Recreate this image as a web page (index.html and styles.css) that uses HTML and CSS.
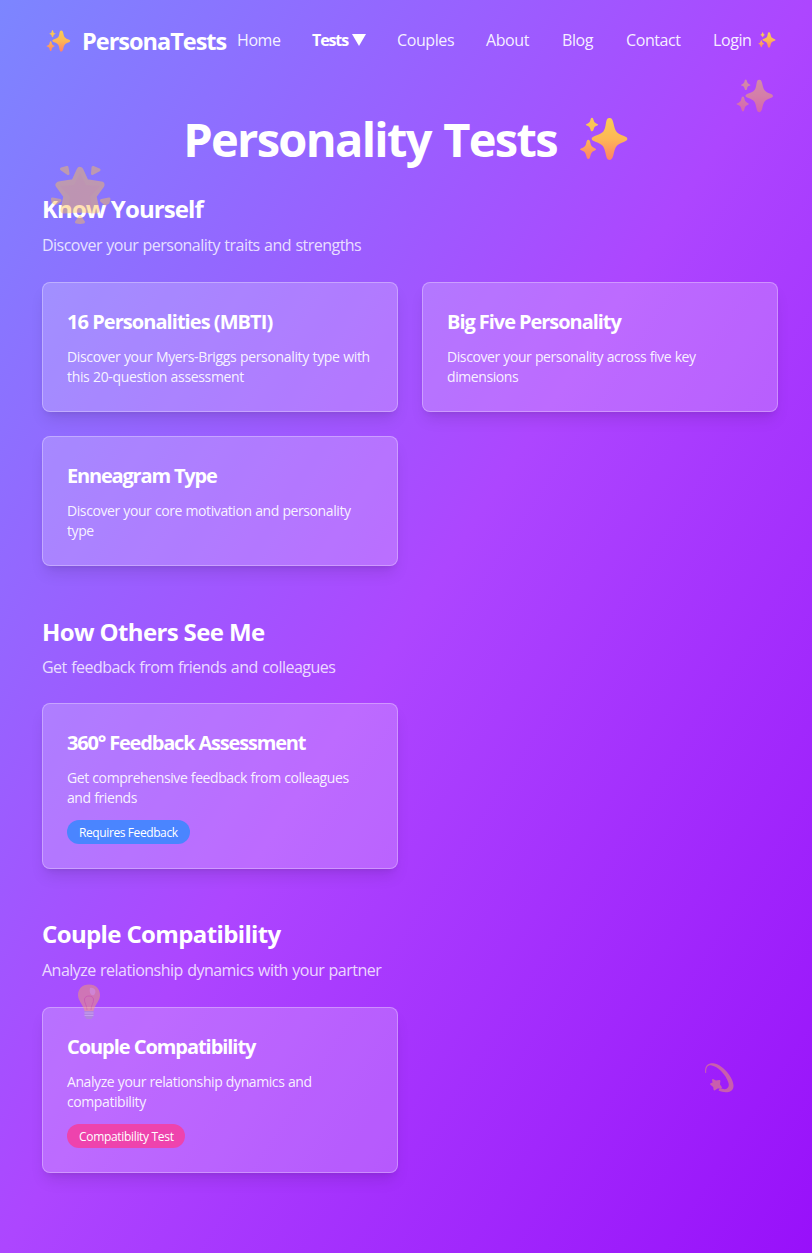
FILE: index.html
```html
<!DOCTYPE html>
<html lang="en">
<head>
<meta charset="utf-8">
<title>PersonaTests</title>
<link rel="stylesheet" href="styles.css">
</head>
<body>
<svg class="defs" aria-hidden="true">
  <defs>
    <linearGradient id="gold" gradientUnits="userSpaceOnUse" x1="0" y1="39" x2="0" y2="165">
      <stop offset="0" stop-color="#f8cc55"/><stop offset=".5" stop-color="#fdb755"/><stop offset="1" stop-color="#ff8068"/>
    </linearGradient>
    <symbol id="sparkles" viewBox="28 36 148 132">
      <g fill="url(#gold)">
        <path d="M118 39C124 38 127 42 130 53C136 80 139 84 162 93C169 96 172 98 172 102C172 106 168 108 161 111C139 119 136 124 130 151C127 161 124 165 118 165C112 165 110 160 108 151C103 124 100 119 76 110C69 107 65 105 65 101C65 97 69 95 76 92C100 84 104 80 108 53C110 43 112 39 118 39Z"/>
        <path d="M66 38C69 38 70 42 71 46C73 53 75 54 80 56C86 58 86 60 80 62C75 64 73 65 71 73C70 77 69 79 66 79C63 79 62 76 61 72C59 65 57 64 52 62C46 60 46 58 52 56C57 54 59 53 61 46C62 41 63 38 66 38Z"/>
        <path d="M55 104C58 104 60 107 61 113C63 122 65 125 73 129C80 132 80 134 73 137C65 140 63 144 61 153C60 159 58 162 55 162C52 162 50 159 49 153C47 144 45 140 37 137C28 134 28 132 37 129C45 125 47 122 49 113C50 107 52 104 55 104Z"/>
      </g>
    </symbol>
  </defs>
</svg>

<header class="topbar">
  <a class="brand"><svg class="brand-icon"><use href="#sparkles"/></svg><span>PersonaTests</span></a>
  <nav class="nav">
    <a>Home</a>
    <a class="active">Tests <svg class="caret" viewBox="0 0 14 12"><path d="M0 0H14L7 12Z" fill="#fff"/></svg></a>
    <a>Couples</a>
    <a>About</a>
    <a>Blog</a>
    <a>Contact</a>
    <a class="login">Login <svg class="login-icon"><use href="#sparkles"/></svg></a>
  </nav>
</header>

<main class="content">
  <h1 class="title"><span>Personality Tests</span><svg class="title-icon"><use href="#sparkles"/></svg></h1>

  <section class="section">
    <h2 class="tight">Know Yourself</h2>
    <p class="lead">Discover your personality traits and strengths</p>
    <div class="cards">
      <article class="card"><h3 class="loose">16 Personalities (MBTI)</h3><p class="loose">Discover your Myers-Briggs personality type with<br>this 20-question assessment</p></article>
      <article class="card"><h3>Big Five Personality</h3><p>Discover your personality across five key<br>dimensions</p></article>
      <article class="card"><h3 class="tight">Enneagram Type</h3><p>Discover your core motivation and personality<br>type</p></article>
    </div>
  </section>

  <section class="section">
    <h2>How Others See Me</h2>
    <p class="lead">Get feedback from friends and colleagues</p>
    <div class="cards">
      <article class="card"><h3 class="tight">360° Feedback Assessment</h3><p>Get comprehensive feedback from colleagues<br>and friends</p><span class="badge blue">Requires Feedback</span></article>
    </div>
  </section>

  <section class="section">
    <h2>Couple Compatibility</h2>
    <p class="lead">Analyze relationship dynamics with your partner</p>
    <div class="cards">
      <article class="card"><h3>Couple Compatibility</h3><p>Analyze your relationship dynamics and<br>compatibility</p><span class="badge pink">Compatibility Test</span></article>
    </div>
  </section>
</main>

<svg class="float float-star" viewBox="0 0 60 60">
  <g fill="#ffc452" stroke="#ffc452" stroke-linejoin="round">
    <path stroke-width="7" d="M29 5.500L34.500 17.500L50 20L42 31L45 45L29 44L13 45L16 31L8 20L23.500 17.500Z"/>
    <path stroke-width="3" d="M10.500 4L16 2.500L17 8.500ZM42 2.500L48 5L41.500 8.500ZM1.500 34L9 35.500L4.500 38.500L2 37ZM50.500 35.500L58 34L57 37.500L54.500 39ZM29 52L32.500 57L29 57.500L25.500 57Z"/>
  </g>
  <path d="M29 8L35 20L49 21L39 32L41 43H17L19 32L9 21L23 20Z" fill="#ff9d65" opacity=".25"/>
</svg>
<svg class="float float-sparkles"><use href="#sparkles"/></svg>
<svg class="float float-bulb" viewBox="0 0 24 36">
  <path d="M12 .5C5 .5 1 5.300 1 11C1 17 6 20 7.500 27H16.500C18 20 23 17 23 11C23 5.300 19 .5 12 .5Z" fill="#ffa760"/>
  <path d="M13 4C18 3 20 8 17 11C14 12 12 9 13 4Z" fill="#ffe0d0" opacity=".6"/>
  <path d="M10 26C10 21 7 19 7.500 15C8 11 16 11 16.500 15C17 19 14 21 14 26" fill="none" stroke="#ee6457" stroke-width=".8"/>
  <path d="M7.500 27H16.500V32L14.500 35H9.500L7.500 32Z" fill="#a4a0b8"/>
  <path d="M7.500 29H16.500M7.500 31.500H16.500" stroke="#d9d4e8" stroke-width="1"/>
</svg>
<svg class="float float-dizzy" viewBox="0 0 30 31">
  <path d="M.3 10C-.8 3 3 0 8 .3C17 1 28 14 28.500 22C29 30 20 30.500 13.500 27.500L15 25C20 27.500 25 26 23.500 20C21 11 12 3 6 2.200C2 2 1 5 1.200 10Z" fill="#ffad52"/>
  <path d="M8 17L11 18.500L14.500 18L14 21.500L16 24.500L12.500 24.500L9.500 26.500L9 23.500L6 21L8.500 20Z" fill="#ffad52" stroke="#ffad52" stroke-width="1.800" stroke-linejoin="round"/>
</svg>
</body>
</html>
```

FILE: styles.css
```css
* { box-sizing: border-box; }
body {
  position: relative;
  margin: 0;
  height: 1253px;
  overflow: hidden;
  font-family: "Open Sans", "Noto Sans", sans-serif;
  font-size: 16px;
  line-height: 24px;
  color: #fff;
  background: linear-gradient(to bottom right, #7c86ff, #ad46ff 50%, #9810fa);
}
h1, h2, h3, p { margin: 0; white-space: nowrap; }
.defs { position: absolute; width: 0; height: 0; }

.topbar { display: flex; height: 82px; padding-left: 46px; align-items: center; }
.brand { display: flex; flex: 0 0 191px; align-items: center; gap: 11px; font-size: 23.5px; font-weight: 700; line-height: 32px; letter-spacing: -1px; white-space: nowrap; }
.brand-icon { width: 25px; height: 22px; }
.nav { display: grid; grid-template-columns: 75px 85px 89px 76px 64px 87px 66px; margin-bottom: 2px; color: rgba(255,255,255,.92); letter-spacing: -.4px; white-space: nowrap; }
.nav .active { font-weight: 700; color: #fff; letter-spacing: -1.1px; word-spacing: 1px; }
.caret { width: 14px; height: 12px; }
.login-icon { width: 18px; height: 16px; vertical-align: -2px; margin-left: 3px; }

.content { padding: 27px 34px 0 42px; }
.title { display: flex; justify-content: center; align-items: center; gap: 22px; height: 60px; margin-bottom: 22px; padding-right: 8px; font-size: 47px; font-weight: 700; letter-spacing: -1.7px; word-spacing: 2px; }
.title-icon { width: 50px; height: 44px; }
.section { margin-bottom: 48px; }
.section h2 { height: 33.5px; margin-bottom: 8px; font-size: 24px; line-height: 35px; font-weight: 700; letter-spacing: -.63px; }
.section h2.tight { letter-spacing: -.9px; }
.lead { margin-bottom: 24px; color: rgba(255,255,255,.8); letter-spacing: -.52px; word-spacing: .75px; }
.section:first-of-type .lead { margin-bottom: 25.1px; }
.section:nth-of-type(2) { margin-bottom: 47.4px; }
.section:last-of-type .lead { margin-bottom: 24.6px; }
.cards { display: grid; grid-template-columns: 1fr 1fr; gap: 24px; }
.card {
  padding: 24px;
  border: 1px solid rgba(255,255,255,.3);
  border-radius: 8px;
  background: rgba(255,255,255,.2);
  box-shadow: 0 10px 15px -3px rgba(0,0,0,.1), 0 4px 6px -4px rgba(0,0,0,.1);
}
.card h3 { height: 28px; margin-bottom: 12px; font-size: 20px; line-height: 30px; font-weight: 700; letter-spacing: -1.05px; }
.card h3.loose { letter-spacing: -.95px; }
.card h3.tight { letter-spacing: -1.18px; }
.card p { font-size: 14px; line-height: 20px; color: rgba(255,255,255,.92); letter-spacing: -.41px; word-spacing: .3px; }
.card p.loose { letter-spacing: -.34px; }
.badge { display: block; width: 123px; height: 24px; margin-top: 12px; padding-left: 12px; border-radius: 12px; font-size: 12px; line-height: 26px; letter-spacing: -.4px; white-space: nowrap; }
.blue { background: #4a85ff; }
.pink { width: 118px; background: #ee43ad; letter-spacing: -.32px; }

/* Decorations floating over the page */
.float { position: absolute; opacity: .45; }
.float-star { left: 51px; top: 165px; width: 60px; height: 60px; }
.float-sparkles { left: 736px; top: 79px; width: 38px; height: 34px; opacity: .5; }
.float-bulb { left: 77px; top: 984px; width: 24px; height: 36px; }
.float-dizzy { left: 705px; top: 1063px; width: 30px; height: 31px; }
```
